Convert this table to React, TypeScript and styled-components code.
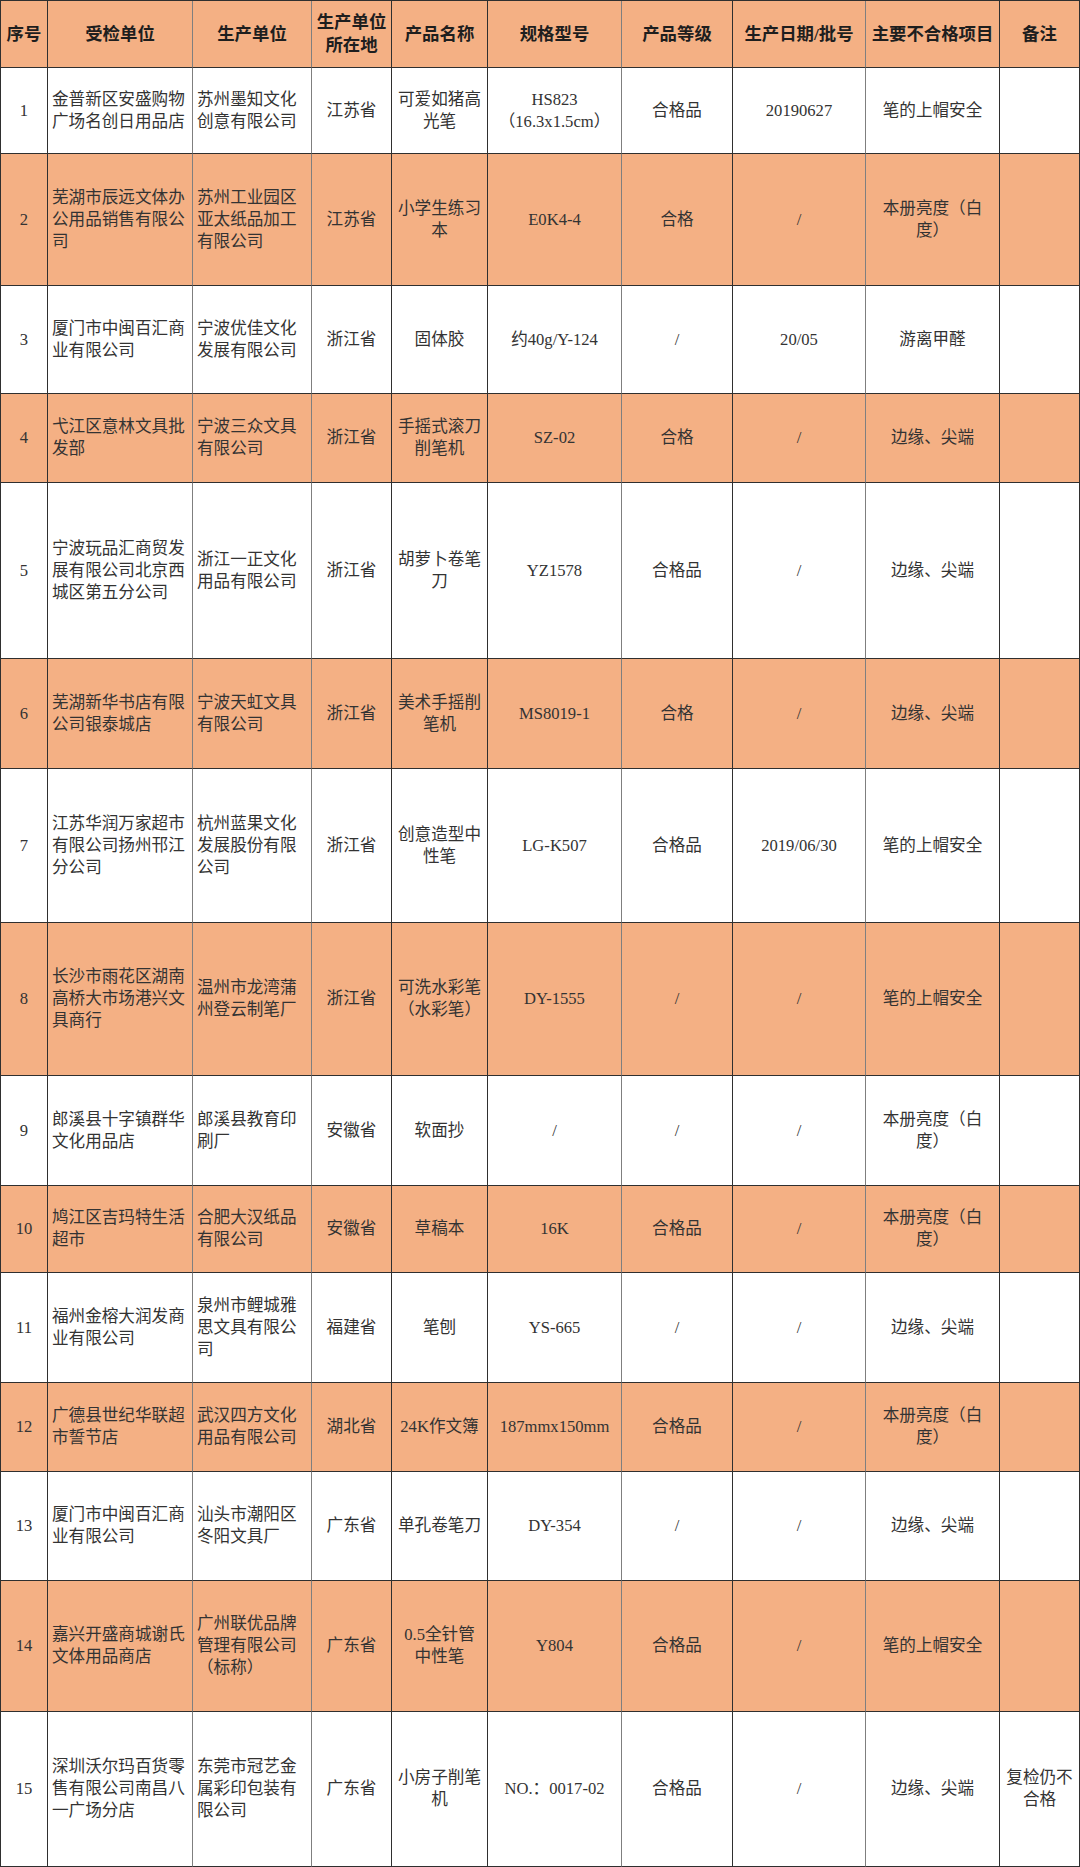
import React from 'react';
import styled, { createGlobalStyle } from 'styled-components';

const GlobalStyle = createGlobalStyle`
  html, body {
    margin: 0;
    padding: 0;
    background: #ffffff;
  }
`;

type Align = 'left' | 'center';

interface ColumnDef {
  title: string;
  width: number;
  align: Align;
  line: string;
}

const DARK = '#2f2f2f';
const GREY = '#7f7f7f';
const ORANGE = '#f4b084';

// 本册亮度 wraps after the first half of the bracket in the sheet
const BRIGHT = '本册亮度（白\n度）';

const columns: ColumnDef[] = [
  { title: '序号', width: 47, align: 'center', line: DARK },
  { title: '受检单位', width: 145, align: 'left', line: GREY },
  { title: '生产单位', width: 119, align: 'left', line: GREY },
  { title: '生产单位所在地', width: 80, align: 'center', line: DARK },
  { title: '产品名称', width: 96, align: 'center', line: DARK },
  { title: '规格型号', width: 134, align: 'center', line: GREY },
  { title: '产品等级', width: 111, align: 'center', line: DARK },
  { title: '生产日期/批号', width: 133, align: 'center', line: GREY },
  { title: '主要不合格项目', width: 134, align: 'center', line: DARK },
  { title: '备注', width: 80, align: 'center', line: DARK },
];

const gridTemplate = columns.map((c) => `${c.width}px`).join(' ');

interface RowData {
  height: number;
  cells: string[];
}

const rows: RowData[] = [
  { height: 86, cells: ['1', '金普新区安盛购物广场名创日用品店', '苏州墨知文化创意有限公司', '江苏省', '可爱如猪高光笔', 'HS823\n（16.3x1.5cm）', '合格品', '20190627', '笔的上帽安全', ''] },
  { height: 132, cells: ['2', '芜湖市辰远文体办公用品销售有限公司', '苏州工业园区亚太纸品加工有限公司', '江苏省', '小学生练习本', 'E0K4-4', '合格', '/', BRIGHT, ''] },
  { height: 108, cells: ['3', '厦门市中闽百汇商业有限公司', '宁波优佳文化发展有限公司', '浙江省', '固体胶', '约40g/Y-124', '/', '20/05', '游离甲醛', ''] },
  { height: 89, cells: ['4', '弋江区意林文具批发部', '宁波三众文具有限公司', '浙江省', '手摇式滚刀削笔机', 'SZ-02', '合格', '/', '边缘、尖端', ''] },
  { height: 176, cells: ['5', '宁波玩品汇商贸发展有限公司北京西城区第五分公司', '浙江一正文化用品有限公司', '浙江省', '胡萝卜卷笔刀', 'YZ1578', '合格品', '/', '边缘、尖端', ''] },
  { height: 110, cells: ['6', '芜湖新华书店有限公司银泰城店', '宁波天虹文具有限公司', '浙江省', '美术手摇削笔机', 'MS8019-1', '合格', '/', '边缘、尖端', ''] },
  { height: 154, cells: ['7', '江苏华润万家超市有限公司扬州邗江分公司', '杭州蓝果文化发展股份有限公司', '浙江省', '创意造型中性笔', 'LG-K507', '合格品', '2019/06/30', '笔的上帽安全', ''] },
  { height: 153, cells: ['8', '长沙市雨花区湖南高桥大市场港兴文具商行', '温州市龙湾蒲州登云制笔厂', '浙江省', '可洗水彩笔\n（水彩笔）', 'DY-1555', '/', '/', '笔的上帽安全', ''] },
  { height: 110, cells: ['9', '郎溪县十字镇群华文化用品店', '郎溪县教育印刷厂', '安徽省', '软面抄', '/', '/', '/', BRIGHT, ''] },
  { height: 87, cells: ['10', '鸠江区吉玛特生活超市', '合肥大汉纸品有限公司', '安徽省', '草稿本', '16K', '合格品', '/', BRIGHT, ''] },
  { height: 110, cells: ['11', '福州金榕大润发商业有限公司', '泉州市鲤城雅思文具有限公司', '福建省', '笔刨', 'YS-665', '/', '/', '边缘、尖端', ''] },
  { height: 89, cells: ['12', '广德县世纪华联超市誓节店', '武汉四方文化用品有限公司', '湖北省', '24K作文簿', '187mmx150mm', '合格品', '/', BRIGHT, ''] },
  { height: 109, cells: ['13', '厦门市中闽百汇商业有限公司', '汕头市潮阳区冬阳文具厂', '广东省', '单孔卷笔刀', 'DY-354', '/', '/', '边缘、尖端', ''] },
  { height: 131, cells: ['14', '嘉兴开盛商城谢氏文体用品商店', '广州联优品牌管理有限公司\n（标称）', '广东省', '0.5全针管\n中性笔', 'Y804', '合格品', '/', '笔的上帽安全', ''] },
  { height: 155, cells: ['15', '深圳沃尔玛百货零售有限公司南昌八一广场分店', '东莞市冠艺金属彩印包装有限公司', '广东省', '小房子削笔\n机', 'NO.：0017-02', '合格品', '/', '边缘、尖端', '复检仍不\n合格'] },
];

const Sheet = styled.div`
  width: 1080px;
  box-sizing: border-box;
  border-left: 1px solid ${DARK};
  border-top: 1px solid ${DARK};
  font-family: 'Liberation Serif', 'Noto Sans CJK SC', serif;
`;

const Row = styled.div<{ $height: number; $shaded: boolean }>`
  display: grid;
  grid-template-columns: ${gridTemplate};
  height: ${(p) => p.$height}px;
  background: ${(p) => (p.$shaded ? ORANGE : '#ffffff')};
`;

const Cell = styled.div<{ $align: Align; $line: string }>`
  box-sizing: border-box;
  display: flex;
  align-items: center;
  justify-content: ${(p) => (p.$align === 'left' ? 'flex-start' : 'center')};
  text-align: ${(p) => p.$align};
  padding: ${(p) => (p.$align === 'left' ? '0 2px 0 4px' : '0 3px')};
  border-right: 1px solid ${(p) => p.$line};
  border-bottom: 1px solid ${DARK};
  color: #333333;
  font-size: 16.6px;
  line-height: 22px;
  white-space: pre-line;
  word-break: break-all;
  overflow: hidden;
`;

const HeadCell = styled(Cell)`
  justify-content: center;
  text-align: center;
  padding: 0 3px;
  color: #1e1e1e;
  font-size: 17.4px;
  font-weight: 700;
  line-height: 23px;
`;

const App = (): React.ReactElement => {
  return (
    <>
      <GlobalStyle />
      <Sheet>
        <Row $height={67} $shaded>
          {columns.map((col) => (
            <HeadCell key={col.title} $align="center" $line={col.line}>
              {col.title}
            </HeadCell>
          ))}
        </Row>
        {rows.map((row, i) => (
          <Row key={row.cells[0]} $height={row.height} $shaded={i % 2 === 1}>
            {row.cells.map((text, j) => (
              <Cell key={j} $align={columns[j].align} $line={columns[j].line}>
                {text}
              </Cell>
            ))}
          </Row>
        ))}
      </Sheet>
    </>
  );
};

export default App;
